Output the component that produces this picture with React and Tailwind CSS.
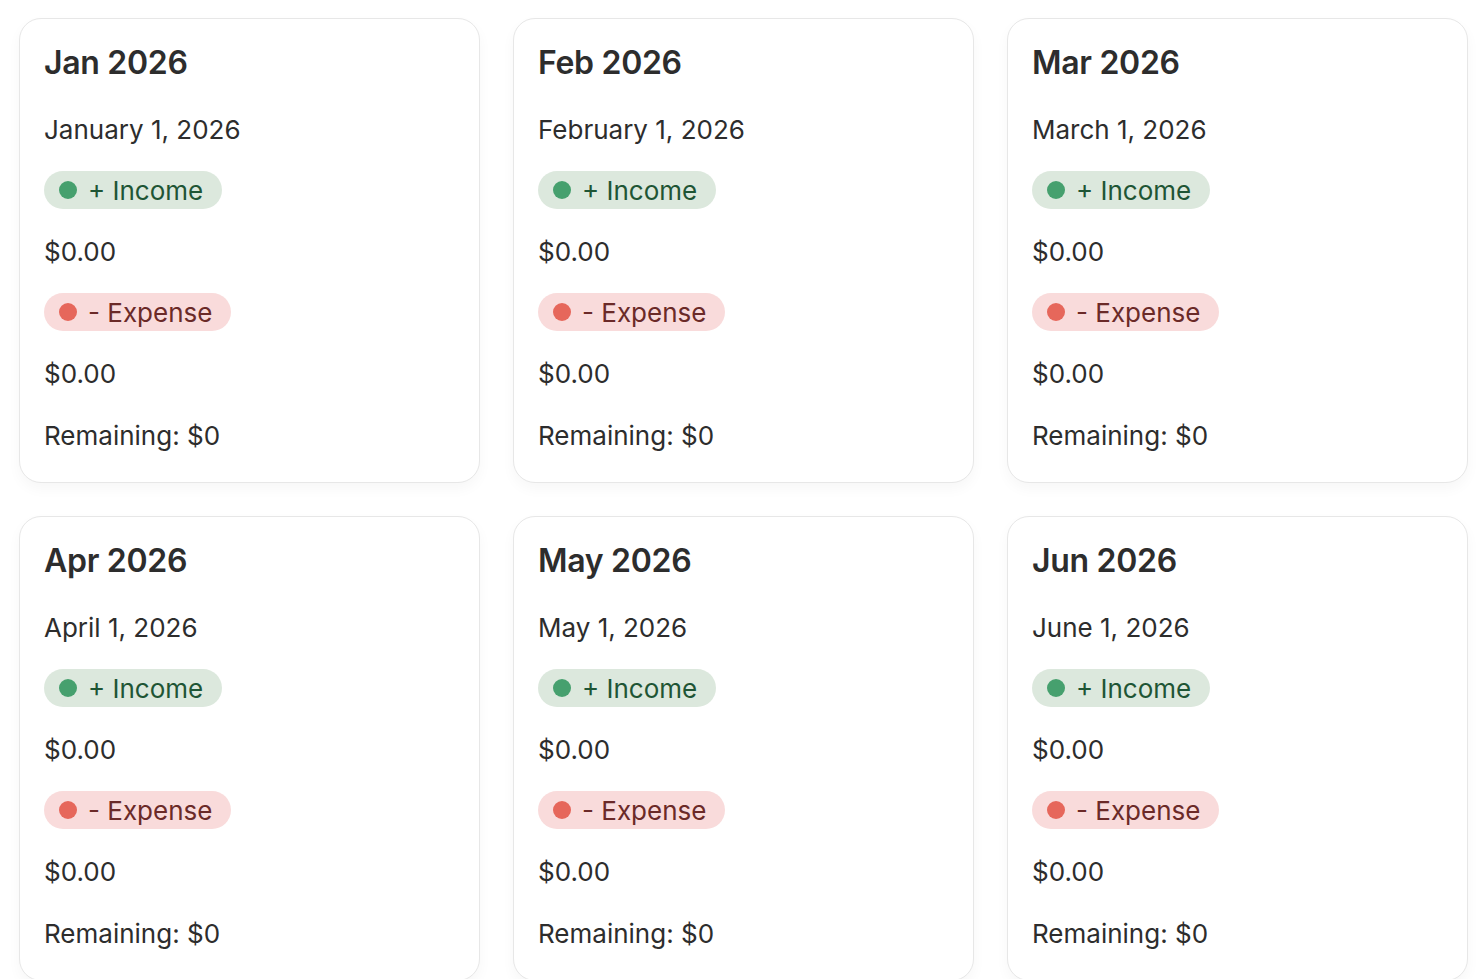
import React from "react";

const months = [
  ["Jan 2026", "January 1, 2026"],
  ["Feb 2026", "February 1, 2026"],
  ["Mar 2026", "March 1, 2026"],
  ["Apr 2026", "April 1, 2026"],
  ["May 2026", "May 1, 2026"],
  ["Jun 2026", "June 1, 2026"],
];

function Card({ title, date }) {
  return (
    <div className="rounded-[22px] border border-[#e7e7e7] bg-white shadow-[0_6px_14px_rgba(0,0,0,0.035)] pl-[24px] pt-[24px] pb-[30px] h-[465px]">
      <div className="text-[32px] leading-[40px] font-semibold text-[#2d2d2d] tracking-[-0.3px]">{title}</div>
      <div className="mt-[31px] text-[26px] leading-[32px] text-[#2d2d2d]">{date}</div>
      <div className="mt-[25px] flex">
        <span className="inline-flex items-center h-[38px] rounded-full bg-[#dce8dd] pl-[15px] pr-[19px] text-[26px] text-[#1f5535]">
          <span className="w-[18px] h-[18px] rounded-full bg-[#46a06e] mr-[11px]"></span>
          + Income
        </span>
      </div>
      <div className="mt-[27px] text-[26px] leading-[32px] text-[#2d2d2d]">$0.00</div>
      <div className="mt-[25px] flex">
        <span className="inline-flex items-center h-[38px] rounded-full bg-[#f9dbdb] pl-[15px] pr-[19px] text-[26px] text-[#6b2a28]">
          <span className="w-[18px] h-[18px] rounded-full bg-[#e6675b] mr-[11px]"></span>
          - Expense
        </span>
      </div>
      <div className="mt-[27px] text-[26px] leading-[32px] text-[#2d2d2d]">$0.00</div>
      <div className="mt-[30px] text-[26px] leading-[32px] text-[#2d2d2d]">Remaining: $0</div>
    </div>
  );
}

export default function App() {
  return (
    <div className="bg-white min-h-screen pl-[19px] pr-[12px] pt-[18px] pb-[20px]" style={{ fontFamily: "Inter, 'Noto Sans', sans-serif" }}>
      <div className="grid grid-cols-3 gap-x-[33px] gap-y-[33px]">
        {months.map(([t, d]) => (
          <Card key={t} title={t} date={d} />
        ))}
      </div>
    </div>
  );
}
